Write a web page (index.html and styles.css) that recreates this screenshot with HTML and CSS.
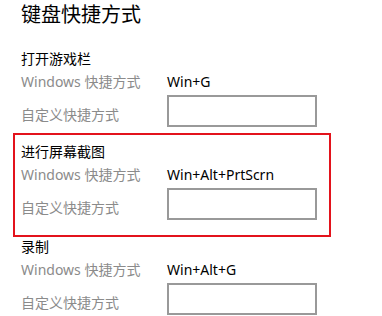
FILE: index.html
```html
<!DOCTYPE html>
<html>
<head>
	<meta charset="UTF-8">
	<title>键盘快捷方式</title>
	<link rel="stylesheet" href="styles.css">
</head>
<body>
	<div class="page">
		<h1 class="title">键盘快捷方式</h1>

		<div class="section">
			<div class="section-head">打开游戏栏</div>
			<div class="row">
				<span class="label">Windows 快捷方式</span>
				<span class="value">Win+G</span>
			</div>
			<div class="row row-input">
				<span class="label">自定义快捷方式</span>
				<input class="key-box" type="text">
			</div>
		</div>

		<!-- 截图这一项用红框标出 -->
		<div class="section highlight">
			<div class="section-head">进行屏幕截图</div>
			<div class="row">
				<span class="label">Windows 快捷方式</span>
				<span class="value">Win+Alt+PrtScrn</span>
			</div>
			<div class="row row-input">
				<span class="label">自定义快捷方式</span>
				<input class="key-box" type="text">
			</div>
		</div>

		<div class="section">
			<div class="section-head">录制</div>
			<div class="row">
				<span class="label">Windows 快捷方式</span>
				<span class="value">Win+Alt+G</span>
			</div>
			<div class="row row-input">
				<span class="label">自定义快捷方式</span>
				<input class="key-box" type="text">
			</div>
		</div>
	</div>
</body>
</html>
```

FILE: styles.css
```css
*{margin:0;padding:0;box-sizing:border-box;}
body{
	background:#fff;
	font-family:"Noto Sans","Noto Sans CJK SC",sans-serif;
	font-size:14px;
	color:#000;
	overflow:hidden;
}
.page{
	padding-left:21px;
}
.title{
	font-size:20px;
	font-weight:normal;
	line-height:28px;
	padding-top:1px;
}
.section{
	margin-top:20px;
}
.section-head{
	line-height:20px;
}
.row{
	display:grid;
	grid-template-columns:146px 150px;
	align-items:center;
	margin-top:3px;
	line-height:20px;
}
.label{
	color:#8b8b8b;
}
.row-input .label{
	padding-top:7px;
}
.value{
	color:#000;
}
.key-box{
	width:150px;
	height:32px;
	border:2px solid #999;
	background:#fff;
	outline:none;
}
.highlight{
	margin-top:6px;
	margin-left:-8px;
	width:318px;
	padding:7px 0 15px 6px;
	border:2px solid #e3131c;
}
.highlight + .section{
	margin-top:0;
}
```
